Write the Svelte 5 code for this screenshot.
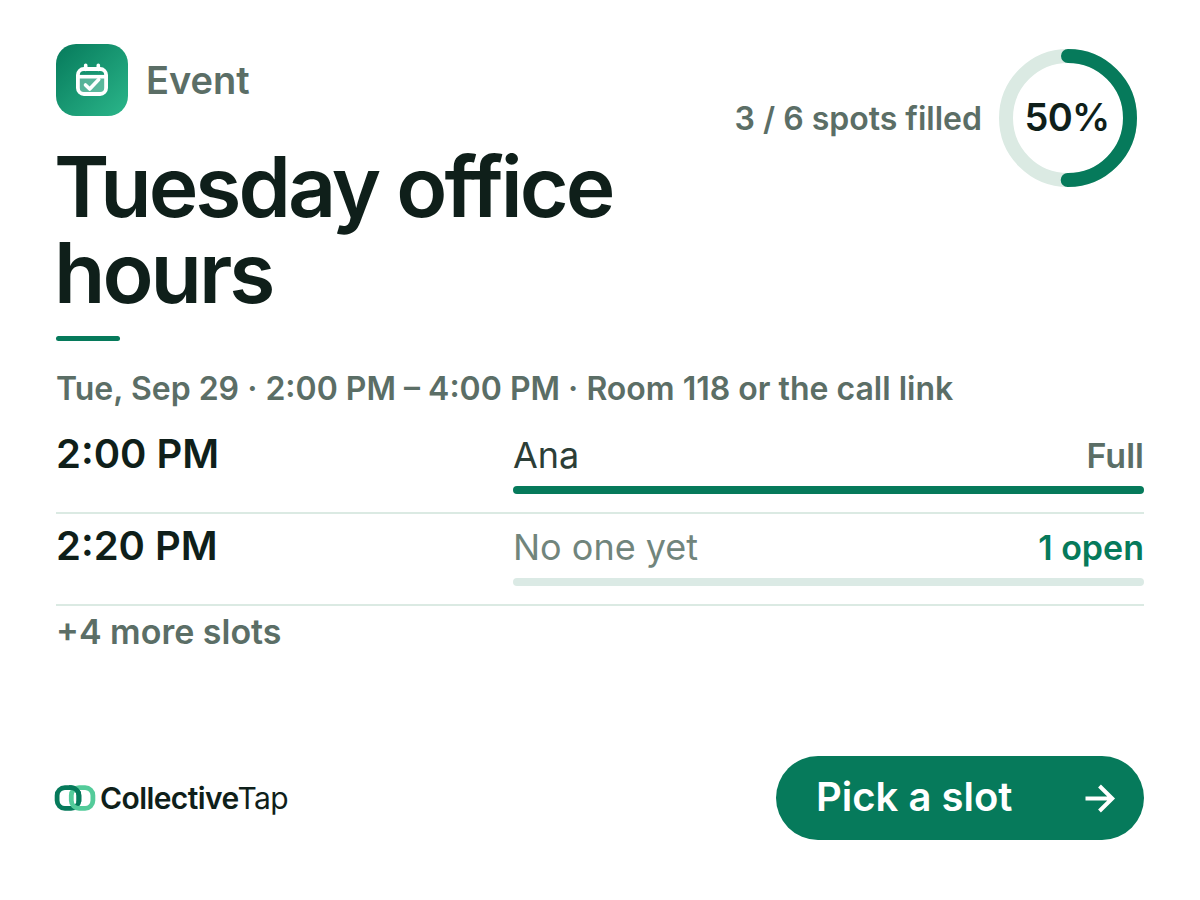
<script>
  const filled = 3;
  const total = 6;
  const percent = Math.round((filled / total) * 100);
  const radius = 62;
  const circumference = 2 * Math.PI * radius;
  const slots = [
    { time: '2:00 PM', who: 'Ana', status: 'Full', fill: 100 },
    { time: '2:20 PM', who: 'No one yet', status: '1 open', fill: 0 }
  ];
</script>

<main class="card">
  <header class="top">
    <div class="heading">
      <div class="kind">
        <span class="tile">
          <svg width="36" height="36" viewBox="0 0 36 36" fill="none" stroke="#fff" stroke-linecap="round" stroke-linejoin="round">
            <path d="M4 14h28v14a5 5 0 0 1-5 5H9a5 5 0 0 1-5-5z" fill="#fff" fill-opacity=".28" stroke="none" />
            <rect x="3.9" y="7" width="28.2" height="25" rx="6" stroke-width="3.8" />
            <path d="M4 14.7h28" stroke-width="3.6" stroke-linecap="butt" />
            <path d="M11.7 3.2v4.3M24.3 3.2v4.3" stroke-width="3.6" />
            <path d="M11.5 23l4.2 4 9-9.5" stroke-width="3.6" />
          </svg>
        </span>
        <span class="kind-label">Event</span>
      </div>
      <h1>Tuesday office hours</h1>
      <div class="accent"></div>
    </div>
    <div class="progress">
      <span class="spots">{filled} / {total} spots filled</span>
      <div class="ring">
        <svg width="152" height="152" viewBox="0 0 152 152" fill="none" stroke-width="14">
          <circle cx="76" cy="76" r={radius} stroke="#dbeae3" />
          <circle cx="76" cy="76" r={radius} stroke="#067a5b" stroke-linecap="round"
            stroke-dasharray="{(circumference * percent) / 100} {circumference}" transform="rotate(-90 76 76)" />
        </svg>
        <span class="percent">{percent}%</span>
      </div>
    </div>
  </header>

  <p class="when">Tue, Sep 29 · 2:00 PM – 4:00 PM · Room 118 or the call link</p>

  <section class="slots">
    {#each slots as slot}
      <div class="slot">
        <span class="time">{slot.time}</span>
        <div class="detail">
          <div class="line">
            <span class="who" class:empty={slot.fill === 0}>{slot.who}</span>
            <span class="status" class:open={slot.fill === 0}>{slot.status}</span>
          </div>
          <div class="track"><div class="fill" style="width: {slot.fill}%"></div></div>
        </div>
      </div>
    {/each}
    <p class="more">+4 more slots</p>
  </section>

  <footer>
    <div class="brand">
      <svg width="42" height="28" viewBox="0 0 42 28" fill="none" stroke-width="4.8">
        <rect x="3.1" y="3.6" width="21.8" height="20.8" rx="7.8" stroke="#067a5b" />
        <rect x="17.3" y="3.6" width="21.6" height="20.8" rx="7.8" stroke="#54cb9a" />
        <path d="M15 3.6h2.1a7.8 7.8 0 0 1 7.8 7.8v6.6" stroke="#067a5b" />
      </svg>
      <span class="name"><b>Collective</b><span class="tap">Tap</span></span>
    </div>
    <button>
      <span class="label">Pick a slot</span>
      <svg width="32" height="32" viewBox="0 0 32 32" fill="none" stroke="#fff" stroke-width="4">
        <path d="M1.5 16.5h27M15.5 4L28.2 16.5 15.5 29" />
      </svg>
    </button>
  </footer>
</main>

<style>
  :global(body) {
    margin: 0;
    background: #fff;
  }
  .card {
    box-sizing: border-box;
    width: 1200px;
    height: 900px;
    padding: 44px 56px 60px;
    display: flex;
    flex-direction: column;
    font-family: Inter, sans-serif;
    color: #0f1f1a;
    background: #fff;
  }
  .top {
    display: flex;
    justify-content: space-between;
    align-items: flex-start;
  }
  .heading {
    width: 640px;
  }
  .kind {
    display: flex;
    align-items: center;
    gap: 18px;
  }
  .tile {
    width: 72px;
    height: 72px;
    border-radius: 20px;
    background: linear-gradient(135deg, #067a5b, #2bb68a);
    display: flex;
    align-items: center;
    justify-content: center;
  }
  .kind-label {
    font-size: 38px;
    font-weight: 600;
    color: #5b6e66;
  }
  h1 {
    margin: 28px 0 0 -2px;
    font-size: 84px;
    line-height: 86px;
    font-weight: 600;
    letter-spacing: -3px;
  }
  .accent {
    margin-top: 20px;
    width: 64px;
    height: 5px;
    border-radius: 3px;
    background: #067a5b;
  }
  .progress {
    display: flex;
    align-items: center;
    gap: 10px;
    margin-top: -2px;
  }
  .spots {
    font-size: 32px;
    font-weight: 600;
    color: #5b6e66;
  }
  .ring {
    display: grid;
    width: 152px;
    height: 152px;
    place-items: center;
  }
  .ring > * {
    grid-area: 1 / 1;
  }
  .percent {
    font-size: 38px;
    font-weight: 600;
    letter-spacing: -0.02em;
    padding: 0 2px 2px 0;
  }
  .when {
    margin: 28px 0 0;
    font-size: 32px;
    line-height: 40px;
    font-weight: 600;
    color: #5b6e66;
  }
  .slots {
    margin-top: 13px;
  }
  .slot {
    box-sizing: border-box;
    height: 92px;
    display: grid;
    grid-template-columns: 457px 1fr;
    border-bottom: 2px solid #dbeae3;
  }
  .time {
    font-size: 40px;
    line-height: 48px;
    padding-top: 8px;
    font-weight: 600;
  }
  .line {
    display: flex;
    justify-content: space-between;
    align-items: baseline;
    height: 44px;
    padding-top: 11px;
    line-height: 44px;
    margin-bottom: 9px;
  }
  .who {
    font-size: 36px;
    color: #2c3e37;
  }
  .who.empty {
    color: #71857c;
  }
  .status {
    font-size: 34px;
    font-weight: 600;
    color: #5b6e66;
  }
  .status.open {
    color: #067a5b;
  }
  .track {
    height: 8px;
    border-radius: 4px;
    background: #dbeae5;
    overflow: hidden;
  }
  .fill {
    height: 100%;
    background: #067a5b;
  }
  .more {
    margin: 5px 0 0;
    font-size: 34px;
    line-height: 42px;
    font-weight: 600;
    color: #5b6e66;
  }
  footer {
    margin-top: auto;
    display: flex;
    justify-content: space-between;
    align-items: center;
  }
  .brand {
    display: flex;
    align-items: center;
    gap: 4px;
    margin-left: -2px;
  }
  .name {
    font-size: 30px;
    letter-spacing: -0.02em;
  }
  .name b {
    font-weight: 600;
  }
  .tap {
    margin-left: -1px;
  }
  button {
    box-sizing: border-box;
    width: 368px;
    height: 84px;
    padding: 0 28px 0 40px;
    border: 0;
    border-radius: 42px;
    background: #067a5b;
    color: #fff;
    font: 600 40px Inter, sans-serif;
    display: flex;
    justify-content: space-between;
    align-items: center;
  }
  .label {
    padding-bottom: 3px;
  }
</style>
